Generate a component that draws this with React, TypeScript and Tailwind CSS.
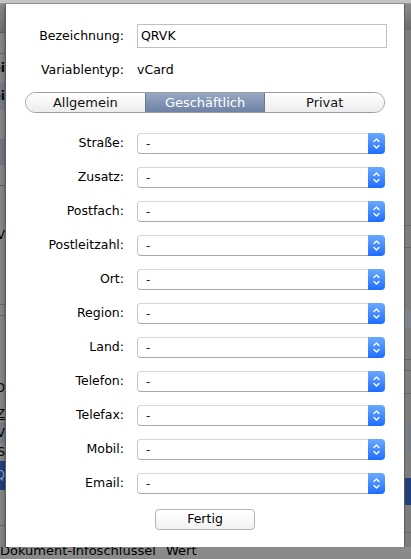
import React from 'react';

const fields = [
  'Straße',
  'Zusatz',
  'Postfach',
  'Postleitzahl',
  'Ort',
  'Region',
  'Land',
  'Telefon',
  'Telefax',
  'Mobil',
  'Email',
];

function Stepper() {
  return (
    <div className="w-[17px] h-full rounded-r-[4px] bg-gradient-to-b from-[#6aa8ff] to-[#1c6cff] flex items-center justify-center">
      <svg width="17" height="21" viewBox="0 0 17 21" fill="none" stroke="white" strokeWidth="1.4" strokeLinecap="round" strokeLinejoin="round">
        <path d="M6 8.5 L8.5 6 L11 8.5" />
        <path d="M6 12.5 L8.5 15 L11 12.5" />
      </svg>
    </div>
  );
}

function PopUp() {
  return (
    <div className="flex w-[248px] h-[21px]">
      <div className="flex-1 flex items-center pl-[8px] rounded-l-[4px] border border-r-0 border-[#c6c6c6] border-t-[#d6d6d6] border-b-[#a8a8a8] bg-white text-[12px] text-[#222]">
        -
      </div>
      <Stepper />
    </div>
  );
}

function LeftStrip() {
  return (
    <div className="w-[5px] flex flex-col bg-[#858585] overflow-hidden">
      <div className="h-[28px] bg-gradient-to-b from-[#8a8a8a] to-[#6f6f6f]" />
      <div className="h-px bg-[#5c5c5c]" />
      <div className="h-[20px]" />
      <div className="h-px bg-[#6a6a6a]" />
      <div className="h-[29px] text-[12px] font-bold leading-[29px] text-black whitespace-nowrap flex justify-end">ei</div>
      <div className="h-[27px] bg-[#767b85] text-[12px] font-bold leading-[27px] text-black whitespace-nowrap flex justify-end">ei</div>
      <div className="h-[29px]" />
      <div className="h-[26px] bg-[#727680]" />
      <div className="h-[20px]" />
      <div className="h-px bg-[#5e5e5e]" />
      <div className="h-[40px]" />
      <div className="h-[18px] text-[12px] leading-[18px] text-black whitespace-nowrap flex justify-end">V</div>
      <div className="h-[60px]" />
      <div className="h-px bg-[#6a6a6a]" />
      <div className="h-[10px]" />
      <div className="h-px bg-[#6a6a6a]" />
      <div className="h-[63px]" />
      <div className="h-[18px] text-[12px] leading-[18px] text-black whitespace-nowrap flex justify-end">D</div>
      <div className="h-[8px]" />
      <div className="h-[18px] text-[12px] leading-[18px] text-black whitespace-nowrap flex justify-end underline">Z</div>
      <div className="h-[20px] bg-[#767b85] text-[12px] leading-[20px] text-black whitespace-nowrap flex justify-end">V</div>
      <div className="h-[18px] text-[12px] leading-[18px] text-black whitespace-nowrap flex justify-end">S</div>
      <div className="h-[29px] bg-[#1e3f7a] text-[12px] leading-[29px] text-[#8aa0d0] whitespace-nowrap flex justify-end">Q</div>
      <div className="h-[35px]" />
      <div className="h-px bg-[#6a6a6a]" />
      <div className="flex-1" />
    </div>
  );
}

function RightStrip() {
  return (
    <div className="w-[6px] flex flex-col bg-[#7d7d7d] overflow-hidden">
      <div className="h-[26px] bg-gradient-to-b from-[#8a8a8a] to-[#6c6c6c]" />
      <div className="h-[195px]" />
      <div className="h-px bg-[#666]" />
      <div className="h-[21px]" />
      <div className="h-px bg-[#666]" />
      <div className="h-[62px]" />
      <div className="h-[18px] bg-[#80838b]" />
      <div className="h-[31px]" />
      <div className="h-px bg-[#666]" />
      <div className="h-[10px]" />
      <div className="h-px bg-[#666]" />
      <div className="h-[22px]" />
      <div className="h-px bg-[#666]" />
      <div className="h-[28px]" />
      <div className="h-[30px] bg-[#767b85]" />
      <div className="h-[26px]" />
      <div className="h-[27px] bg-[#1e3f7a]" />
      <div className="h-[27px]" />
      <div className="h-px bg-[#666]" />
      <div className="flex-1" />
    </div>
  );
}

export default function App() {
  return (
    <div
      className="w-[411px] h-[559px] flex flex-col bg-[#808080] overflow-hidden text-black"
      style={{ fontFamily: '"DejaVu Sans", Verdana, sans-serif' }}
    >
      <div className="h-[4px] bg-[#c4c4c4] border-b border-[#9a9a9a]" />
      <div className="flex h-[543px]">
        <LeftStrip />
        <div className="w-[400px] flex flex-col bg-white border-x border-[#5e5e5e] shadow-[0_2px_4px_rgba(0,0,0,0.4)]">
          <div className="flex items-center mt-[20px] h-[24px]">
            <div className="w-[118px] text-right text-[12.5px]">Bezeichnung:</div>
            <div className="ml-[13px] w-[250px] h-[24px] border border-[#c0c0c0] flex items-center pl-[3px] text-[12.5px]">QRVK</div>
          </div>
          <div className="flex items-center mt-[12px] h-[20px]">
            <div className="w-[118px] text-right text-[12.5px]">Variablentyp:</div>
            <div className="ml-[13px] text-[12.5px]">vCard</div>
          </div>
          <div className="flex ml-[19px] mt-[12px] w-[360px] h-[21px] rounded-full border border-[#9c9c9c] overflow-hidden text-[13px]">
            <div className="flex-1 flex items-center justify-center bg-gradient-to-b from-white to-[#ececec] text-[#111]">Allgemein</div>
            <div className="flex-1 flex items-center justify-center border-x border-[#6b7a93] bg-gradient-to-b from-[#98a8c2] to-[#6d82a6] text-white">Geschäftlich</div>
            <div className="flex-1 flex items-center justify-center bg-gradient-to-b from-white to-[#ececec] text-[#111]">Privat</div>
          </div>
          <div className="flex flex-col gap-[13px] mt-[20px]">
            {fields.map((f) => (
              <div key={f} className="flex items-center h-[21px]">
                <div className="w-[118px] text-right text-[12.5px]">{f}:</div>
                <div className="ml-[13px]">
                  <PopUp />
                </div>
              </div>
            ))}
          </div>
          <div className="flex justify-center mt-[15px]">
            <div className="w-[100px] h-[21px] rounded-[4px] border border-[#b4b4b4] bg-gradient-to-b from-white to-[#f2f2f2] flex items-center justify-center text-[12.5px]">
              Fertig
            </div>
          </div>
        </div>
        <RightStrip />
      </div>
      <div className="h-[12px] overflow-hidden bg-[#8a8a8a] flex">
        <div className="-mt-[4px] flex text-[13px] leading-[16px] text-black whitespace-nowrap">
          <span className="w-[166px]">Dokument-Infoschlüssel</span>
          <span>Wert</span>
        </div>
      </div>
    </div>
  );
}
